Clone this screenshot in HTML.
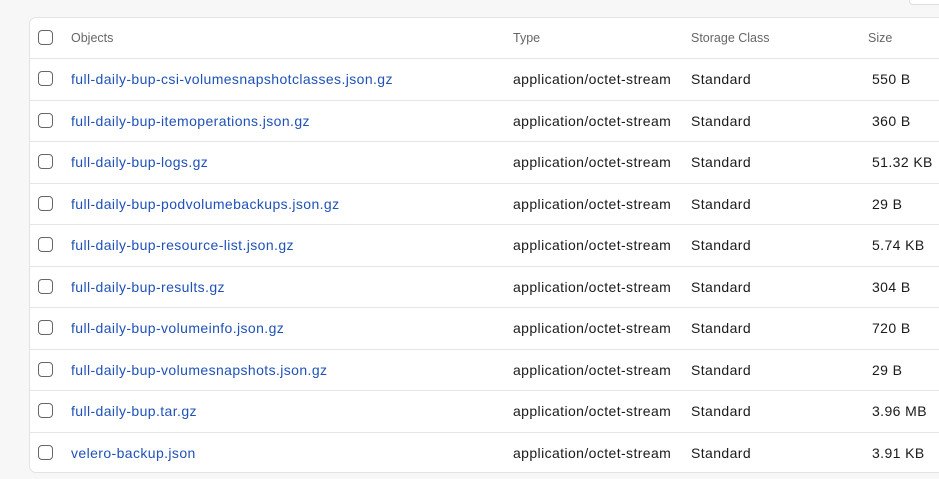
<!DOCTYPE html>
<html><head><style>
body{margin:0;background:#f7f7f7;width:939px;height:479px;overflow:hidden;font-family:"Liberation Sans",sans-serif;position:relative}
.card{position:absolute;left:29px;top:17px;width:930px;height:456px;background:#fff;border:1px solid #e3e3e3;border-radius:7px;box-sizing:border-box;overflow:hidden}
.row{position:absolute;left:0;right:0;height:41.5px;border-bottom:1px solid #e6e6e6;box-sizing:border-box}
.row.last{border-bottom:none}
.cb{position:absolute;left:8px;top:50%;margin-top:-8px;width:15px;height:15px;border:1.3px solid #666;border-radius:4px;box-sizing:border-box}
.c{position:absolute;top:50%;transform:translateY(-50%);font-size:14px;color:#1a1a1a;white-space:nowrap;letter-spacing:0.4px}
.h .c{font-size:12.5px;color:#666;letter-spacing:0}
.o{left:41px}.t{left:483px}.s{left:661px}.z{left:842px}
a{color:#1f51b8;text-decoration:none}
.tr{position:absolute;left:909px;top:-6px;width:40px;height:9px;border:1px solid #ddd;border-radius:4px;background:#fff}
</style></head><body>
<div class="tr"></div>
<div class="card">
<div class="row h" style="top:0;height:41px"><div class="cb"></div><div class="c o">Objects</div><div class="c t">Type</div><div class="c s">Storage Class</div><div class="c z" style="left:838px">Size</div></div>
<div class="row" style="top:41px"><div class="cb"></div><div class="c o"><a>full-daily-bup-csi-volumesnapshotclasses.json.gz</a></div><div class="c t">application/octet-stream</div><div class="c s">Standard</div><div class="c z">550 B</div></div>
<div class="row" style="top:82.5px"><div class="cb"></div><div class="c o"><a>full-daily-bup-itemoperations.json.gz</a></div><div class="c t">application/octet-stream</div><div class="c s">Standard</div><div class="c z">360 B</div></div>
<div class="row" style="top:124px"><div class="cb"></div><div class="c o"><a>full-daily-bup-logs.gz</a></div><div class="c t">application/octet-stream</div><div class="c s">Standard</div><div class="c z">51.32 KB</div></div>
<div class="row" style="top:165.5px"><div class="cb"></div><div class="c o"><a>full-daily-bup-podvolumebackups.json.gz</a></div><div class="c t">application/octet-stream</div><div class="c s">Standard</div><div class="c z">29 B</div></div>
<div class="row" style="top:207px"><div class="cb"></div><div class="c o"><a>full-daily-bup-resource-list.json.gz</a></div><div class="c t">application/octet-stream</div><div class="c s">Standard</div><div class="c z">5.74 KB</div></div>
<div class="row" style="top:248.5px"><div class="cb"></div><div class="c o"><a>full-daily-bup-results.gz</a></div><div class="c t">application/octet-stream</div><div class="c s">Standard</div><div class="c z">304 B</div></div>
<div class="row" style="top:290px"><div class="cb"></div><div class="c o"><a>full-daily-bup-volumeinfo.json.gz</a></div><div class="c t">application/octet-stream</div><div class="c s">Standard</div><div class="c z">720 B</div></div>
<div class="row" style="top:331.5px"><div class="cb"></div><div class="c o"><a>full-daily-bup-volumesnapshots.json.gz</a></div><div class="c t">application/octet-stream</div><div class="c s">Standard</div><div class="c z">29 B</div></div>
<div class="row" style="top:373px"><div class="cb"></div><div class="c o"><a>full-daily-bup.tar.gz</a></div><div class="c t">application/octet-stream</div><div class="c s">Standard</div><div class="c z">3.96 MB</div></div>
<div class="row last" style="top:414.5px"><div class="cb"></div><div class="c o"><a>velero-backup.json</a></div><div class="c t">application/octet-stream</div><div class="c s">Standard</div><div class="c z">3.91 KB</div></div>
</div>
</body></html>
